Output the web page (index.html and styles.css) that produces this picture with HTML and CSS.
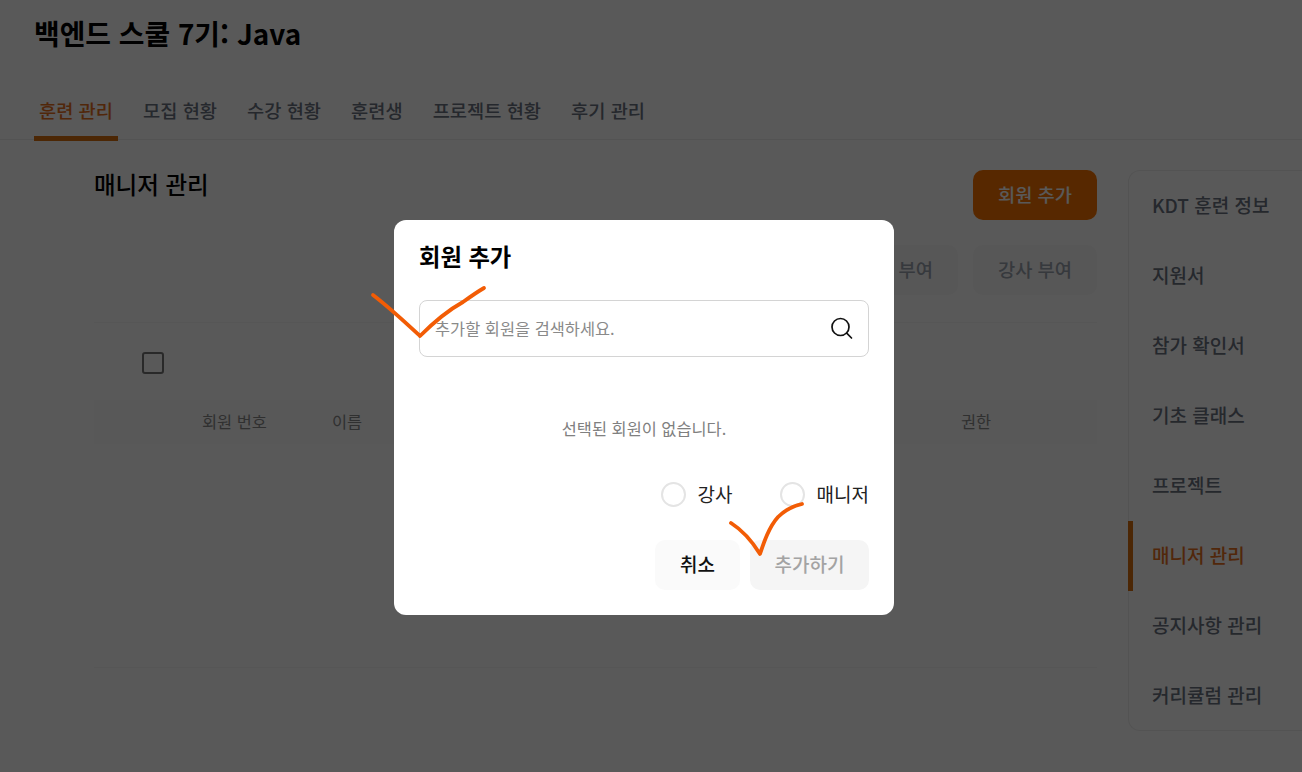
FILE: index.html
```html
<!DOCTYPE html>
<html lang="ko">
<head>
  <meta charset="UTF-8" />
  <title>매니저 관리</title>
  <link rel="stylesheet" href="styles.css">
</head>
<body>
  <header class="page-head">
    <h1>백엔드 스쿨 7기: Java</h1>
    <nav class="tabs">
      <a class="tab active" href="#">훈련 관리</a>
      <a class="tab" href="#">모집 현황</a>
      <a class="tab" href="#">수강 현황</a>
      <a class="tab" href="#">훈련생</a>
      <a class="tab" href="#">프로젝트 현황</a>
      <a class="tab" href="#">후기 관리</a>
    </nav>
  </header>

  <div class="layout">
    <main class="content">
      <div class="content-head">
        <h2>매니저 관리</h2>
        <button class="btn-primary">회원 추가</button>
      </div>
      <div class="grant-row">
        <button class="btn-grant">매니저 부여</button>
        <button class="btn-grant">강사 부여</button>
      </div>
      <div class="table-box">
        <div class="check-row"><span class="checkbox"></span></div>
        <div class="table-head">
          <span class="col-no">회원 번호</span>
          <span class="col-name">이름</span>
          <span class="col-role">권한</span>
        </div>
      </div>
    </main>

    <aside class="side">
      <a class="side-item" href="#">KDT 훈련 정보</a>
      <a class="side-item" href="#">지원서</a>
      <a class="side-item" href="#">참가 확인서</a>
      <a class="side-item" href="#">기초 클래스</a>
      <a class="side-item" href="#">프로젝트</a>
      <a class="side-item active" href="#">매니저 관리</a>
      <a class="side-item" href="#">공지사항 관리</a>
      <a class="side-item" href="#">커리큘럼 관리</a>
    </aside>
  </div>

  <div class="backdrop">
    <div class="modal">
      <h3>회원 추가</h3>
      <div class="search">
        <span class="search-text">추가할 회원을 검색하세요.</span>
        <svg class="search-icon" width="24" height="24" viewBox="0 0 24 24" fill="none" stroke="#111" stroke-width="1.7" stroke-linecap="round">
          <circle cx="10.5" cy="10" r="8.5"/>
          <path d="M16.7 16.2l4.8 4.8"/>
        </svg>
      </div>
      <p class="empty">선택된 회원이 없습니다.</p>
      <div class="roles">
        <label class="role"><span class="radio"></span>강사</label>
        <label class="role"><span class="radio"></span>매니저</label>
      </div>
      <div class="actions">
        <button class="btn-cancel">취소</button>
        <button class="btn-add">추가하기</button>
      </div>
    </div>
  </div>

  <!-- pen marks drawn on top of the capture -->
  <svg class="ink" width="1302" height="772" viewBox="0 0 1302 772" fill="none" stroke="#f25c05" stroke-width="3.8" stroke-linecap="round" stroke-linejoin="round">
    <path d="M373 295C390 308 406 323 420 336C430 326 445 312 463 302C470 297 477 292 484 288"/>
    <path d="M731 523C742 530 752 541 760 554C764 542 769 527 778 517C785 510 793 506 802 504"/>
  </svg>
</body>
</html>
```
FILE: styles.css
```css
* {
  margin: 0;
  padding: 0;
  box-sizing: border-box;
}
body {
  font-family: "Noto Sans CJK KR", "Noto Sans", sans-serif;
  width: 1302px;
  height: 772px;
  overflow: hidden;
  background: #fff;
  color: #000;
  position: relative;
}
a {
  text-decoration: none;
}
button {
  font-family: inherit;
  border: none;
}

.page-head {
  padding: 13px 0 0 34px;
  border-bottom: 1px solid #eee;
}
.page-head h1 {
  font-size: 27.9px;
  font-weight: 600;
  line-height: 40px;
}
.tabs {
  display: flex;
  gap: 20px;
  height: 55px;
  margin-top: 31px;
}
.tab {
  padding: 0 5px;
  height: 57px;
  line-height: 52px;
  font-size: 18.7px;
  font-weight: 500;
  color: #6b7280;
  border-bottom: 5px solid transparent;
}
.tab.active {
  color: #e8701e;
  border-bottom-color: #d9700f;
}

.layout {
  display: flex;
  padding-top: 30px;
}
.content {
  flex: none;
  width: 1128px;
  padding-left: 94px;
  padding-right: 31px;
}
.content-head {
  display: flex;
  justify-content: space-between;
  align-items: flex-start;
}
.content-head h2 {
  font-size: 23.5px;
  font-weight: 500;
  line-height: 28px;
}
.btn-primary {
  width: 124px;
  height: 50px;
  padding-bottom: 3px;
  border-radius: 10px;
  background: #f97400;
  color: #fff;
  font-size: 18.7px;
  font-weight: 500;
}
.grant-row {
  display: flex;
  justify-content: flex-end;
  gap: 15px;
  margin-top: 25px;
}
.btn-grant {
  height: 50px;
  padding: 0 25px 3px;
  border-radius: 10px;
  background: #f9f9f9;
  color: #9ca3af;
  font-size: 18.7px;
  font-weight: 500;
  white-space: nowrap;
}
.table-box {
  margin-top: 27px;
  height: 346px;
  border-top: 1px solid #f6f6f6;
  border-bottom: 1px solid #f6f6f6;
}
.check-row {
  padding: 29px 0 0 48px;
  height: 77px;
}
.checkbox {
  display: block;
  width: 22px;
  height: 22px;
  border: 2px solid #777;
  border-radius: 3px;
}
.table-head {
  display: flex;
  height: 44px;
  padding-top: 9px;
  font-size: 16.4px;
  color: #8b8b8b;
  background: #fbfbfb;
}
.col-no {
  margin-left: 108px;
  width: 130px;
}
.col-name {
  width: 629px;
}

.side {
  flex: none;
  width: 220px;
  height: 561px;
  border: 1px solid #ededed;
  border-right: none;
  border-radius: 12px 0 0 12px;
}
.side-item {
  display: block;
  height: 70px;
  line-height: 68px;
  margin-left: -1px;
  padding-left: 19px;
  font-size: 19px;
  font-weight: 500;
  color: #6b7280;
  border-left: 5px solid transparent;
}
.side-item.active {
  color: #e8701e;
  border-left-color: #d9700f;
}

.backdrop {
  position: absolute;
  inset: 0;
  background: rgba(0, 0, 0, 0.65);
}
.modal {
  position: absolute;
  left: 394px;
  top: 220px;
  width: 500px;
  height: 395px;
  padding: 20px 25px;
  background: #fff;
  border-radius: 12px;
}
.modal h3 {
  font-size: 23.3px;
  font-weight: 600;
  line-height: 32px;
}
.search {
  display: flex;
  align-items: center;
  justify-content: space-between;
  height: 57px;
  margin-top: 28px;
  padding: 0 14px 0 15px;
  border: 1px solid #d4d4d4;
  border-radius: 8px;
}
.search-text {
  margin-bottom: 2px;
  font-size: 16.4px;
  color: #8a8a8a;
}
.empty {
  margin-top: 59px;
  text-align: center;
  font-size: 16.4px;
  line-height: 24px;
  color: #808080;
}
.roles {
  display: flex;
  justify-content: flex-end;
  gap: 47px;
  margin-top: 41px;
}
.role {
  display: flex;
  align-items: center;
  gap: 12px;
  font-size: 19px;
  line-height: 26px;
  color: #222;
}
.radio {
  width: 25px;
  height: 25px;
  border: 2px solid #e4e4e4;
  border-radius: 50%;
}
.actions {
  display: flex;
  justify-content: flex-end;
  gap: 10px;
  margin-top: 33px;
}
.btn-cancel,
.btn-add {
  height: 50px;
  padding-bottom: 3px;
  border-radius: 10px;
  font-size: 19px;
  font-weight: 500;
}
.btn-cancel {
  width: 85px;
  background: #fafafa;
  color: #111;
}
.btn-add {
  width: 119px;
  background: #f5f5f5;
  color: #a3a3a3;
}

.ink {
  position: absolute;
  left: 0;
  top: 0;
}
```
